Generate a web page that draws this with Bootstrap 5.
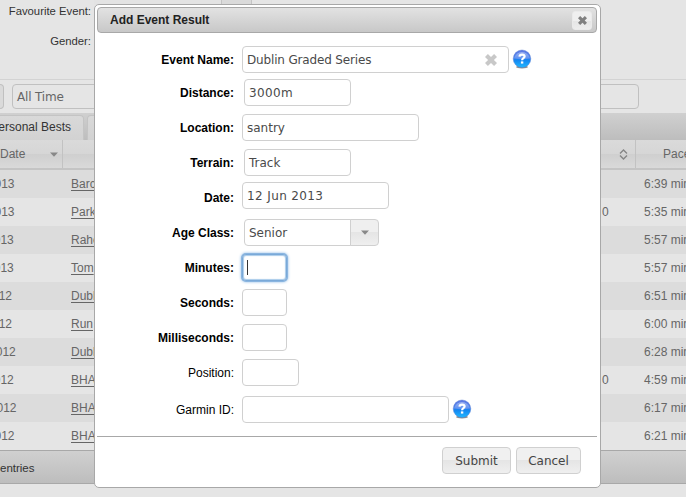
<!DOCTYPE html>
<html lang="en">
<head>
<meta charset="utf-8">
<meta name="viewport" content="width=device-width, initial-scale=1">
<title>Add Event Result</title>
<link rel="stylesheet" href="https://cdn.jsdelivr.net/npm/bootstrap@5.3.0/dist/css/bootstrap.min.css">
<style>
body{width:686px;height:497px;overflow:hidden;background:#e5e5e5;font:12px/16px "Liberation Sans",Arial,sans-serif;color:#333}
.ui-text{font-family:"DejaVu Sans",Verdana,sans-serif;font-size:12px}
.sp-tight{letter-spacing:-.16px}
.sp-num{letter-spacing:.38px}
/* page behind the dialog */
.profile{height:80px;border-bottom:1px solid #d3d3d3}
.profile-label{width:91px;height:30px;padding-top:3px;font-size:11.3px;white-space:nowrap}
.profile-pick{width:128px;height:5px;margin-left:3px;background:#e3e3e3;border-right:1px solid #c4c4c4}
.profile-arrow{width:30px;height:5px;background:#dadada;border-right:1px solid #c4c4c4}
.filters{height:33px;padding-top:4px}
.filter-btn{width:4px;height:25px;border:1px solid #c0c0c0;border-left:0;border-radius:0 4px 4px 0;background:#dadada}
.filter-box{height:25px;border:1px solid #c0c0c0;border-radius:4px;color:#666;padding:4px 4px}
.filter-time{width:200px;margin-left:8px}
.filter-search{width:200px;margin-left:227px}
.tabs-bar{height:27px;background:linear-gradient(#d0d0d0,#bdbdbd)}
.tab-item{height:25px;margin-top:2px;background:linear-gradient(#d9d9d9,#d2d2d2);border:1px solid #c4c4c4;border-bottom:0;border-radius:0 4px 0 0;padding-top:3px;white-space:nowrap}
.tab-best{width:84px;border-left:0;padding-right:12px}
.tab-next{width:60px;margin-left:3px;border-radius:4px 4px 0 0}
.grid-head{height:30px;border-bottom:2px solid #c4c4c4;background:linear-gradient(#dadada 0,#d6d6d6 50%,#cfcfcf 51%,#d9d9d9 100%);color:#666;line-height:28px}
.head-date{width:63px;border-right:1px solid #c2c2c2}
.head-sort{width:573px;border-right:1px solid #c2c2c2;padding-right:7px}
.head-pace{width:50px;padding-left:27px;white-space:nowrap;overflow:hidden}
.grid-row{height:28px;line-height:28px;color:#666;white-space:nowrap;overflow:hidden}
.grid-row>div{flex-shrink:0}
.grid-row:nth-child(odd){background:#dcdcdc}
.cell-date{direction:rtl;overflow:hidden}
.cell-event{width:520px;text-decoration:underline;text-underline-offset:2px}
.cell-time{width:53px;padding-left:11px}
.d16{width:16.5px;margin-right:54.5px}.d15{width:14.5px;margin-right:56.5px}.d14{width:13.8px;margin-right:57.2px}.d12{width:12px;margin-right:59px}.d155{width:15.8px;margin-right:55.2px}
.grid-foot{height:34px;background:linear-gradient(#d0d0d0,#bdbdbd);border-top:1px solid #a8a8a8;border-bottom:1px solid #a8a8a8;padding-top:9px;font-size:11.5px}
/* dialog */
.dlg{position:absolute;left:94px;top:4px;width:507px;height:484px;background:#fff;border:1px solid #a8a8a8;border-radius:5px;padding:2px}
.dlg-title{height:26px;background:linear-gradient(#e2e2e2,#c8c8c8);border:1px solid #a8a8a8;border-radius:4px;padding:0 4px 0 12px;font-size:12px;color:#222;width:500px}
.dlg-close{width:20px;height:19px;border-radius:3px;background:linear-gradient(#efefef 50%,#e5e5e5 51%,#ededed);border:1px solid #eaeaea}
.dlg-form{padding-top:13px;height:403px}
.f-row{height:27px;margin-bottom:8px}
.r-event,.r-terrain{margin-bottom:6px}
.r-date,.r-position{margin-bottom:10px}
.f-label{width:137px;text-align:right;color:#000;margin-right:8px;white-space:nowrap}
.r-date .f-label{padding-top:4px}
.f-box{height:27px;border:1px solid #d0d0d0;border-radius:4px;background:#fff;color:#4a4a4a;padding:0 4px;white-space:nowrap}
.w267{width:267px}.w107{width:107px}.w177{width:177px}.w147{width:147px}.w45{width:45px}.w57{width:57px}.w207{width:207px}
.f-inset{margin-left:2px}
.f-clear{margin-right:7px}
.f-help{margin:-2px 0 0 3px}
.f-focus{border-color:#7aa9d8;box-shadow:0 0 0 1px #8ab5e0,0 0 3px 1px #8ab8e4,inset 0 0 1px 1px #a9cbea}
.caret-bar{width:1px;height:15px;background:#333}
.f-arrow{width:29px;height:27px;margin-left:-1px;border:1px solid #d0d0d0;border-radius:0 4px 4px 0;background:linear-gradient(#efefef 49%,#e5e5e5 50%,#efefef)}
.dlg-foot{border-top:1px solid #a8a8a8;width:500px;padding:10px 16px 0 0}
.f-btn{height:27px;border:1px solid #d0d0d0;border-radius:4px;background:linear-gradient(#f0f0f0 49%,#e5e5e5 50%,#efefef);color:#444;padding:0}
.f-submit{width:69px}.f-cancel{width:65px;margin-left:5px}
</style>
<script src="https://cdn.jsdelivr.net/npm/bootstrap@5.3.0/dist/js/bootstrap.bundle.min.js"></script>
</head>
<body>
<svg width="0" height="0" class="position-absolute">
<defs>
<linearGradient id="blue" x1="0" y1="0" x2="0" y2="1"><stop offset="0" stop-color="#6078e2"/><stop offset=".48" stop-color="#4a86f0"/><stop offset=".55" stop-color="#1483f0"/><stop offset="1" stop-color="#20b9ff"/></linearGradient>
<linearGradient id="shine" x1="0" y1="0" x2="0" y2="1"><stop offset="0" stop-color="#fff" stop-opacity=".4"/><stop offset="1" stop-color="#fff" stop-opacity=".08"/></linearGradient>
<symbol id="help" viewBox="0 0 20 20"><ellipse cx="10" cy="18" rx="6" ry="1.5" fill="#555" opacity=".65"/><circle cx="10" cy="9.8" r="8.8" fill="url(#blue)" stroke="#4a70cc" stroke-width=".4"/><path d="M2.3 9a7.8 7.2 0 0 1 15.4 0Q10 11.6 2.3 9Z" fill="url(#shine)"/><path d="M7.5 7.6Q7.6 5.6 10.1 5.6t2.5 1.9c0 1.7-2.5 1.7-2.5 3.7" fill="none" stroke="#fff" stroke-width="2.2"/><rect x="8.9" y="12.4" width="2.4" height="2.2" fill="#fff"/></symbol>
<symbol id="cross" viewBox="0 0 12 12"><path d="M2.9 0 6 3.1 9.1 0 12 2.9 8.9 6 12 9.1 9.1 12 6 8.9 2.9 12 0 9.1 3.1 6 0 2.9Z" fill="currentColor"/></symbol>
</defs>
</svg>

<main>
  <section class="profile">
    <div class="d-flex"><div class="profile-label text-end">Favourite Event:</div><div class="profile-pick"></div><div class="profile-arrow"></div></div>
    <div class="profile-label text-end">Gender:</div>
  </section>
  <section class="filters d-flex">
    <div class="filter-btn"></div>
    <div class="filter-box filter-time ui-text sp-tight">All Time</div>
    <div class="filter-box filter-search"></div>
  </section>
  <nav class="tabs-bar d-flex">
    <div class="tab-item tab-best d-flex justify-content-end"><span>Personal Bests</span></div>
    <div class="tab-item tab-next"></div>
  </nav>
  <section>
    <div class="grid-head d-flex">
      <div class="head-date d-flex align-items-center justify-content-between pe-1"><span>Date</span><svg width="8" height="5" viewBox="0 0 8 5"><path d="M0 .5h8L4 4.7Z" fill="#888"/></svg></div>
      <div class="head-sort d-flex align-items-center justify-content-end flex-shrink-0"><svg class="me-n1" width="9" height="11" viewBox="0 0 9 11"><path d="M1 4.5 4.5 1 8 4.5M1 6.5 4.5 10 8 6.5" fill="none" stroke="#858585" stroke-width="1.4"/></svg></div>
      <div class="head-pace">Pace</div>
    </div>
    <div>
      <div class="grid-row d-flex"><div class="cell-date d15">2013</div><div class="cell-event">Barcelona</div><div class="cell-time"></div><div>6:39 min/mile</div></div>
      <div class="grid-row d-flex"><div class="cell-date d15">2013</div><div class="cell-event">Parkrun</div><div class="cell-time">0</div><div>5:35 min/mile</div></div>
      <div class="grid-row d-flex"><div class="cell-date d14">2013</div><div class="cell-event">Raheny</div><div class="cell-time"></div><div>5:57 min/mile</div></div>
      <div class="grid-row d-flex"><div class="cell-date d14">2013</div><div class="cell-event">Tom</div><div class="cell-time"></div><div>5:57 min/mile</div></div>
      <div class="grid-row d-flex"><div class="cell-date d12">2012</div><div class="cell-event">Dublin</div><div class="cell-time"></div><div>6:51 min/mile</div></div>
      <div class="grid-row d-flex"><div class="cell-date d12">2012</div><div class="cell-event">Run</div><div class="cell-time"></div><div>6:00 min/mile</div></div>
      <div class="grid-row d-flex"><div class="cell-date d155">2012</div><div class="cell-event">Dublin</div><div class="cell-time"></div><div>6:28 min/mile</div></div>
      <div class="grid-row d-flex"><div class="cell-date d14">2012</div><div class="cell-event">BHAA</div><div class="cell-time">0</div><div>4:59 min/mile</div></div>
      <div class="grid-row d-flex"><div class="cell-date d16">2012</div><div class="cell-event">BHAA</div><div class="cell-time"></div><div>6:17 min/mile</div></div>
      <div class="grid-row d-flex"><div class="cell-date d15">2012</div><div class="cell-event">BHAA</div><div class="cell-time"></div><div>6:21 min/mile</div></div>
    </div>
    <div class="grid-foot">entries</div>
  </section>
</main>

<div class="dlg" role="dialog" aria-label="Add Event Result">
  <div class="dlg-title d-flex align-items-center justify-content-between fw-bold"><span>Add Event Result</span><span class="dlg-close d-flex align-items-center justify-content-center"><svg width="9" height="9" color="#808080"><use href="#cross"/></svg></span></div>
  <div class="dlg-form">
    <div class="f-row d-flex align-items-center r-event"><label class="f-label fw-bold">Event Name:</label><div class="f-box ui-text w267 d-flex align-items-center justify-content-between"><span class="sp-tight">Dublin Graded Series</span><svg class="f-clear" width="12" height="12" color="#c8c8c8"><use href="#cross"/></svg></div><svg class="f-help" width="20" height="20"><use href="#help"/></svg></div>
    <div class="f-row d-flex align-items-center"><label class="f-label fw-bold">Distance:</label><div class="f-box f-inset ui-text sp-num w107 d-flex align-items-center">3000m</div></div>
    <div class="f-row d-flex align-items-center"><label class="f-label fw-bold">Location:</label><div class="f-box ui-text w177 d-flex align-items-center">santry</div></div>
    <div class="f-row d-flex align-items-center r-terrain"><label class="f-label fw-bold">Terrain:</label><div class="f-box f-inset ui-text w107 d-flex align-items-center">Track</div></div>
    <div class="f-row d-flex align-items-center r-date"><label class="f-label fw-bold">Date:</label><div class="f-box ui-text sp-num w147 d-flex align-items-center">12 Jun 2013</div></div>
    <div class="f-row d-flex align-items-center"><label class="f-label fw-bold">Age Class:</label><div class="f-box f-inset ui-text w107 rounded-end-0 d-flex align-items-center">Senior</div><div class="f-arrow d-flex align-items-center justify-content-center"><svg width="8" height="5" viewBox="0 0 8 5"><path d="M0 .5h8L4 4.7Z" fill="#888"/></svg></div></div>
    <div class="f-row d-flex align-items-center"><label class="f-label fw-bold">Minutes:</label><div class="f-box f-focus w45 d-flex align-items-center"><span class="caret-bar"></span></div></div>
    <div class="f-row d-flex align-items-center"><label class="f-label fw-bold">Seconds:</label><div class="f-box w45"></div></div>
    <div class="f-row d-flex align-items-center"><label class="f-label fw-bold">Milliseconds:</label><div class="f-box w45"></div></div>
    <div class="f-row d-flex align-items-center r-position"><label class="f-label">Position:</label><div class="f-box w57"></div></div>
    <div class="f-row d-flex align-items-center"><label class="f-label">Garmin ID:</label><div class="f-box w207"></div><svg class="f-help" width="20" height="20"><use href="#help"/></svg></div>
  </div>
  <div class="dlg-foot d-flex justify-content-end"><button class="f-btn f-submit ui-text">Submit</button><button class="f-btn f-cancel ui-text">Cancel</button></div>
</div>
</body>
</html>
